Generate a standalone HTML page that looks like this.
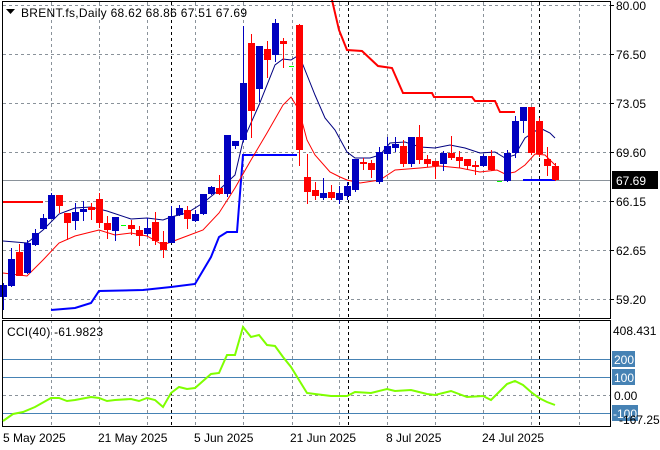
<!DOCTYPE html>
<html><head><meta charset="utf-8"><style>
html,body{margin:0;padding:0;background:#fff;}
svg{display:block;font-family:"Liberation Sans",sans-serif;font-size:12px;}
</style></head><body>
<svg width="660" height="450" viewBox="0 0 660 450" xmlns="http://www.w3.org/2000/svg">
<rect width="660" height="450" fill="#fff"/>
<g stroke="#8a929a" stroke-dasharray="3,3" stroke-width="1">
<path d="M3 5.5H610M3 54.5H610M3 103.5H610M3 152.5H610M3 201.5H610M3 250.5H610M3 299.5H610"/>
<path d="M51.5 2V318M99.5 2V318M147.5 2V318M195.5 2V318M243.5 2V318M292.5 2V318M339.5 2V318M387.5 2V318M435.5 2V318M483.5 2V318M531.5 2V318M579.5 2V318"/>
<path d="M51.5 320V426M99.5 320V426M147.5 320V426M195.5 320V426M243.5 320V426M292.5 320V426M339.5 320V426M387.5 320V426M435.5 320V426M483.5 320V426M531.5 320V426M579.5 320V426M3 395.5H610"/>
</g>
<g stroke="#000" stroke-dasharray="3,3"><path d="M171.5 2V318M348.5 2V318M539.5 2V318M171.5 320V426M348.5 320V426M539.5 320V426"/></g>
<path d="M3 180.5H610" stroke="#8a929a"/>
<polyline fill="none" stroke="#ff0000" stroke-width="2" points="3,202 43,202"/>
<polyline fill="none" stroke="#ff0000" stroke-width="2" points="332,0 339,30 347,50 362,51 378,66 392,68 403,93 432,93 434,97 472,97 475,101 495,101 500,112 515,112"/>
<polyline fill="none" stroke="#0000ff" stroke-width="2" points="51,310 75,308 91,303 99,291 143,290 171,287 195,284 211,257 219,237 227,232 237,232 243,155 297,155"/>
<polyline fill="none" stroke="#0000ff" stroke-width="2" points="523,180 555,180"/>
<polyline fill="none" stroke="#000080" stroke-width="1" points="3,241 27,243 43,230 59,214 75,208 91,207 107,211 131,219 147,218 163,220 171,217 187,213 203,203 219,190 235,175 243,141 259,105 275,65 283,59 291,60 299,55 307,75 315,95 325,118 335,130 347,152 355,158 370,158 380,155 390,143 405,142 420,147 435,148 450,145 465,148 480,153 495,152 505,158 515,155 525,138 540,128 550,133 555,138"/>
<polyline fill="none" stroke="#ff0000" stroke-width="1" points="3,273 27,276 43,260 59,243 75,236 91,232 99,230 115,235 131,233 147,236 163,245 171,242 187,236 203,230 219,213 235,188 251,160 267,133 283,105 291,97 299,110 307,140 315,155 330,172 340,177 347,180 360,183 380,180 395,170 420,168 440,166 460,168 480,172 497,170 505,174 515,172 525,165 535,154 545,155 555,165"/>
<g fill="#0000c0">
<rect x="3" y="283" width="1" height="27"/><rect x="0" y="285" width="7" height="12"/>
<rect x="11" y="248" width="1" height="39"/><rect x="8" y="259" width="7" height="27"/>
<rect x="27" y="240" width="1" height="34"/><rect x="24" y="243" width="7" height="30"/>
<rect x="35" y="229" width="1" height="17"/><rect x="32" y="233" width="7" height="12"/>
<rect x="43" y="214" width="1" height="16"/><rect x="40" y="218" width="7" height="11"/>
<rect x="51" y="193" width="1" height="26"/><rect x="48" y="195" width="7" height="24"/>
<rect x="75" y="203" width="1" height="27"/><rect x="72" y="212" width="7" height="9"/>
<rect x="83" y="201" width="1" height="20"/><rect x="80" y="209" width="7" height="3"/>
<rect x="115" y="217" width="1" height="24"/><rect x="112" y="217" width="7" height="14"/>
<rect x="147" y="218" width="1" height="18"/><rect x="144" y="228" width="7" height="6"/>
<rect x="171" y="206" width="1" height="37"/><rect x="168" y="216" width="7" height="27"/>
<rect x="179" y="205" width="1" height="11"/><rect x="176" y="208" width="7" height="7"/>
<rect x="195" y="210" width="1" height="12"/><rect x="192" y="214" width="7" height="7"/>
<rect x="203" y="194" width="1" height="21"/><rect x="200" y="194" width="7" height="20"/>
<rect x="211" y="186" width="1" height="9"/><rect x="208" y="187" width="7" height="7"/>
<rect x="227" y="135" width="1" height="62"/><rect x="224" y="135" width="7" height="59"/>
<rect x="235" y="141" width="1" height="8"/><rect x="232" y="141" width="7" height="5"/>
<rect x="243" y="26" width="1" height="116"/><rect x="240" y="83" width="7" height="57"/>
<rect x="259" y="46" width="1" height="56"/><rect x="256" y="46" width="7" height="43"/>
<rect x="275" y="19" width="1" height="43"/><rect x="272" y="23" width="7" height="32"/>
<rect x="323" y="178" width="1" height="22"/><rect x="320" y="193" width="7" height="5"/>
<rect x="339" y="186" width="1" height="18"/><rect x="336" y="193" width="7" height="7"/>
<rect x="347" y="182" width="1" height="18"/><rect x="344" y="186" width="7" height="10"/>
<rect x="355" y="159" width="1" height="33"/><rect x="352" y="159" width="7" height="31"/>
<rect x="379" y="147" width="1" height="37"/><rect x="376" y="152" width="7" height="30"/>
<rect x="387" y="137" width="1" height="23"/><rect x="384" y="146" width="7" height="8"/>
<rect x="395" y="137" width="1" height="15"/><rect x="392" y="144" width="7" height="4"/>
<rect x="411" y="137" width="1" height="30"/><rect x="408" y="137" width="7" height="27"/>
<rect x="443" y="151" width="1" height="20"/><rect x="440" y="153" width="7" height="11"/>
<rect x="483" y="154" width="1" height="13"/><rect x="480" y="156" width="7" height="10"/>
<rect x="507" y="150" width="1" height="32"/><rect x="504" y="153" width="7" height="28"/>
<rect x="515" y="116" width="1" height="42"/><rect x="512" y="121" width="7" height="32"/>
<rect x="523" y="107" width="1" height="26"/><rect x="520" y="107" width="7" height="14"/>
</g>
<g fill="#ff0000">
<rect x="19" y="244" width="1" height="32"/><rect x="16" y="252" width="7" height="24"/>
<rect x="59" y="195" width="1" height="18"/><rect x="56" y="195" width="7" height="11"/>
<rect x="67" y="213" width="1" height="27"/><rect x="64" y="213" width="7" height="10"/>
<rect x="91" y="203" width="1" height="17"/><rect x="88" y="207" width="7" height="3"/>
<rect x="99" y="193" width="1" height="35"/><rect x="96" y="199" width="7" height="24"/>
<rect x="107" y="216" width="1" height="23"/><rect x="104" y="223" width="7" height="7"/>
<rect x="131" y="220" width="1" height="15"/><rect x="128" y="225" width="7" height="4"/>
<rect x="139" y="226" width="1" height="20"/><rect x="136" y="230" width="7" height="6"/>
<rect x="155" y="212" width="1" height="33"/><rect x="152" y="222" width="7" height="19"/>
<rect x="163" y="231" width="1" height="27"/><rect x="160" y="242" width="7" height="8"/>
<rect x="187" y="206" width="1" height="23"/><rect x="184" y="210" width="7" height="9"/>
<rect x="219" y="175" width="1" height="20"/><rect x="216" y="188" width="7" height="6"/>
<rect x="251" y="34" width="1" height="104"/><rect x="248" y="43" width="7" height="68"/>
<rect x="267" y="41" width="1" height="37"/><rect x="264" y="49" width="7" height="11"/>
<rect x="283" y="38" width="1" height="30"/><rect x="280" y="41" width="7" height="3"/>
<rect x="299" y="24" width="1" height="142"/><rect x="296" y="25" width="7" height="125"/>
<rect x="307" y="154" width="1" height="50"/><rect x="304" y="177" width="7" height="15"/>
<rect x="315" y="182" width="1" height="18"/><rect x="312" y="190" width="7" height="6"/>
<rect x="331" y="185" width="1" height="15"/><rect x="328" y="192" width="7" height="6"/>
<rect x="363" y="158" width="1" height="12"/><rect x="360" y="162" width="7" height="2"/>
<rect x="371" y="160" width="1" height="18"/><rect x="368" y="163" width="7" height="7"/>
<rect x="403" y="140" width="1" height="27"/><rect x="400" y="146" width="7" height="18"/>
<rect x="419" y="125" width="1" height="39"/><rect x="416" y="137" width="7" height="23"/>
<rect x="427" y="155" width="1" height="12"/><rect x="424" y="159" width="7" height="5"/>
<rect x="435" y="161" width="1" height="18"/><rect x="432" y="161" width="7" height="5"/>
<rect x="451" y="136" width="1" height="24"/><rect x="448" y="153" width="7" height="5"/>
<rect x="459" y="151" width="1" height="17"/><rect x="456" y="157" width="7" height="4"/>
<rect x="467" y="159" width="1" height="11"/><rect x="464" y="159" width="7" height="7"/>
<rect x="475" y="161" width="1" height="14"/><rect x="472" y="165" width="7" height="2"/>
<rect x="491" y="150" width="1" height="21"/><rect x="488" y="156" width="7" height="14"/>
<rect x="531" y="107" width="1" height="48"/><rect x="528" y="107" width="7" height="46"/>
<rect x="539" y="118" width="1" height="39"/><rect x="536" y="121" width="7" height="33"/>
<rect x="547" y="147" width="1" height="29"/><rect x="544" y="159" width="7" height="7"/>
<rect x="555" y="163" width="1" height="18"/><rect x="552" y="166" width="7" height="14"/>
</g>
<g fill="#00ff00"><rect x="121" y="225" width="5" height="1"/><rect x="289" y="66" width="5" height="1"/><rect x="497" y="181" width="5" height="1"/></g>
<rect x="2.5" y="1.5" width="608" height="317" fill="none" stroke="#000"/>
<rect x="2.5" y="320.5" width="608" height="106" fill="none" stroke="#000"/>
<g stroke="#000"><path d="M610 5.5H614M610 54.5H614M610 103.5H614M610 152.5H614M610 201.5H614M610 250.5H614M610 299.5H614"/></g>
<g fill="#000">
<text x="616" y="10">80.00</text><text x="616" y="59">76.50</text><text x="616" y="108">73.05</text><text x="616" y="157">69.60</text><text x="616" y="206">66.15</text><text x="616" y="255">62.65</text><text x="616" y="304">59.20</text>
</g>
<rect x="612" y="171" width="46" height="18" fill="#000"/>
<text x="616" y="185" fill="#fff">67.69</text>
<path d="M6 9h9l-4.5 5z" fill="#000"/>
<text x="21" y="17" fill="#000" textLength="226" lengthAdjust="spacing">BRENT.fs,Daily  68.62 68.86 67.51 67.69</text>
<g stroke="#4682b4"><path d="M3 359.5H610M3 377.5H610M3 413.5H610"/></g>
<polyline fill="none" stroke="#7fff00" stroke-width="2" points="3,421 13,414 23,412 35,407 51,398 59,398 67,401 75,400 91,397 99,398 107,401 115,400 131,399 139,401 147,398 155,400 163,407 171,393 179,387 187,389 195,388 211,374 219,373 227,355 235,355 243,327 251,337 259,335 267,345 275,346 283,357 291,367 307,393 315,394 331,396 347,396 355,392 371,393 387,389 395,391 411,390 427,394 435,395 451,391 467,397 483,396 491,400 499,392 507,384 515,381 523,385 531,392 539,398 547,402 555,405"/>
<text x="7" y="336" fill="#000" textLength="96" lengthAdjust="spacing">CCI(40) -61.9823</text>
<text x="613" y="335" fill="#000">408.431</text>
<rect x="612" y="351" width="23" height="16" fill="#4682b4"/><text x="614" y="364" fill="#fff">200</text>
<rect x="612" y="369" width="23" height="16" fill="#4682b4"/><text x="614" y="382" fill="#fff">100</text>
<text x="614" y="400" fill="#000">0.00</text>
<rect x="612" y="405" width="26" height="16" fill="#4682b4"/><text x="613" y="418" fill="#fff">-100</text>
<text x="619" y="424" fill="#000">-167.252</text>
<g fill="#000">
<text x="3" y="442">5 May 2025</text><text x="98" y="442">21 May 2025</text><text x="194" y="442">5 Jun 2025</text><text x="290" y="442">21 Jun 2025</text><text x="386" y="442">8 Jul 2025</text><text x="482" y="442">24 Jul 2025</text>
</g>
</svg>
</body></html>
